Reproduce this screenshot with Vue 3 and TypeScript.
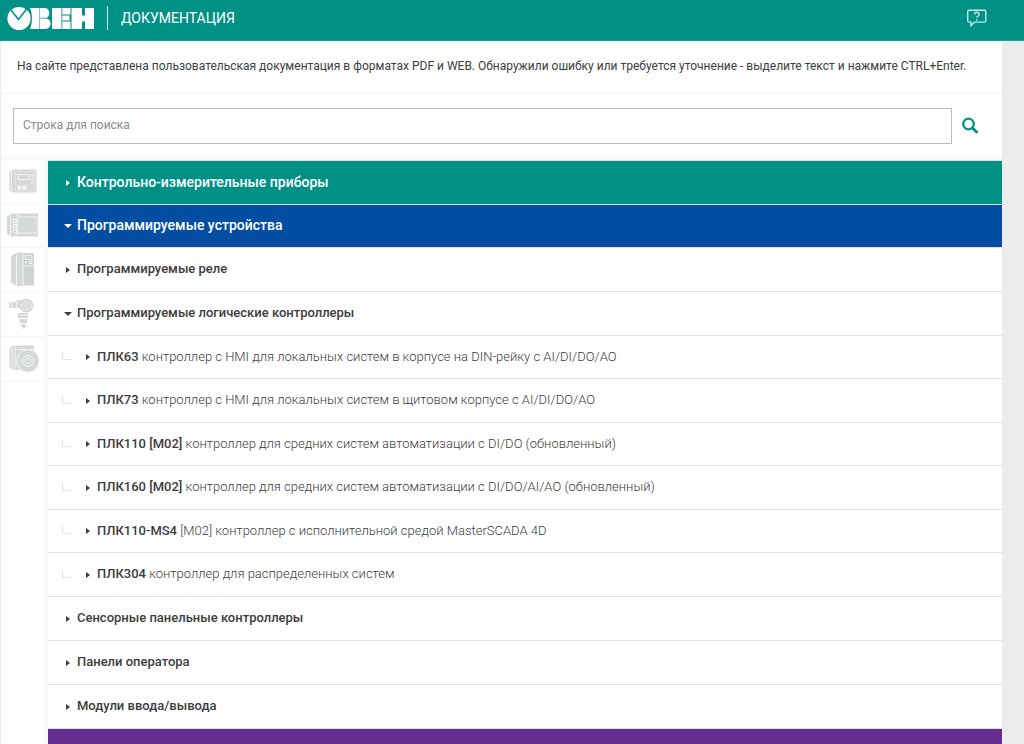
<script setup lang="ts">
import { ref } from 'vue'

interface Product { code: string; text: string }
interface Group { title: string; open: boolean; products: Product[] }

const query = ref('')

const groups = ref<Group[]>([
  { title: 'Программируемые реле', open: false, products: [] },
  {
    title: 'Программируемые логические контроллеры',
    open: true,
    products: [
      { code: 'ПЛК63', text: 'контроллер с HMI для локальных систем в корпусе на DIN-рейку с AI/DI/DO/AO' },
      { code: 'ПЛК73', text: 'контроллер с HMI для локальных систем в щитовом корпусе с AI/DI/DO/AO' },
      { code: 'ПЛК110 [М02]', text: 'контроллер для средних систем автоматизации с DI/DO (обновленный)' },
      { code: 'ПЛК160 [М02]', text: 'контроллер для средних систем автоматизации с DI/DO/AI/AO (обновленный)' },
      { code: 'ПЛК110-MS4', text: '[М02] контроллер с исполнительной средой MasterSCADA 4D' },
      { code: 'ПЛК304', text: 'контроллер для распределенных систем' },
    ],
  },
  { title: 'Сенсорные панельные контроллеры', open: false, products: [] },
  { title: 'Панели оператора', open: false, products: [] },
  { title: 'Модули ввода/вывода', open: false, products: [] },
])
</script>

<template>
  <div class="page">
    <header class="top">
      <a class="logo" href="#" aria-label="ОВЕН">
        <svg width="88" height="25" viewBox="0 0 88 25" fill="#fff">
          <circle cx="12" cy="12.5" r="11.6" />
          <path d="M4 4 11.500 13.500 20 2.500" fill="none" stroke="#009186" stroke-width="1.600" />
          <path d="M23 2h9.500v21H23c2.600-6 2.600-15 0-21z" />
          <path d="M33 2h4.500c5.500 0 6.500 7.500 2.300 9.800H33zM33 12.500h7c5.500 1.700 4.500 10.500-1.500 10.500H33z" />
          <path d="M45 2h9.500v21H45zM55.300 2H63.500v6.500h-8.200zM55.300 9.500H62.500v5h-7.200zM55.300 15.500H63.500V23h-8.200z" />
          <path d="M64.500 2H75v21H64.500zM75 9.500h3v6h-3zM78 2h9v21h-9z" />
        </svg>
      </a>
      <h1>ДОКУМЕНТАЦИЯ</h1>
      <button class="help" type="button" aria-label="Помощь">
        <svg width="22" height="18" viewBox="0 0 22 18" fill="none" stroke="#c5e9e5" stroke-width="1.400">
          <path d="M3 1.200h15.500q1.300 0 1.300 1.300v9.300q0 1.300-1.300 1.300H8.500L5 16.800V13.100H3q-1.300 0-1.300-1.300V2.500q0-1.300 1.300-1.300z" />
          <path d="M8.500 5.500c0-3 4.600-3 4.600 0 0 1.500-2.300 1.500-2.300 3.200M10.800 9.900v1.500" />
        </svg>
      </button>
    </header>

    <main class="content">
      <p class="notice">На сайте представлена пользовательская документация в форматах PDF и WEB. Обнаружили ошибку или требуется уточнение - выделите текст и нажмите CTRL+Enter.</p>

      <form class="search" role="search" @submit.prevent>
        <input v-model="query" type="text" placeholder="Строка для поиска" aria-label="Строка для поиска" />
        <button type="submit" aria-label="Найти">
          <svg width="18" height="18" viewBox="0 0 18 18" fill="none" stroke="#009186">
            <circle cx="7.500" cy="7" r="5.300" stroke-width="2.200" />
            <path d="M11.500 11 15.500 15" stroke-width="3" stroke-linecap="round" />
          </svg>
        </button>
      </form>

      <div class="catalog">
        <nav class="rail" aria-label="Разделы">
          <a href="#" aria-label="Контрольно-измерительные приборы">
            <svg width="34" height="34" viewBox="0 0 34 34">
              <path d="M4.500 7.500 9 5v24l-4.500-2.500z" fill="#d6d9d9" />
              <path d="M6.500 6v22" stroke="#f2f3f3" />
              <rect x="8.500" y="5.500" width="23" height="23" rx="1" fill="#d6d9d9" />
              <rect x="10.500" y="7.500" width="19" height="19" fill="none" stroke="#e3e5e5" />
              <rect x="13" y="10.500" width="11" height="5" fill="none" stroke="#f5f5f5" />
              <path d="M27 10v2M27 14v2M27 18v2" stroke="#f5f5f5" stroke-width="1.500" />
              <path d="M12.500 21.500h4v4h-4zM17.500 21.500h4v4h-4z" fill="#f5f5f5" />
            </svg>
          </a>
          <a href="#" aria-label="Программируемые устройства">
            <svg width="34" height="34" viewBox="0 0 34 34">
              <path d="M2 8.500 6 5.500h27v23H6l-4-3z" fill="#d6d9d9" />
              <path d="M5.500 5.500v23M12.500 5.500v23M12.500 9h20M12.500 25h20" stroke="#f2f3f3" />
              <path d="M8.500 11.500h3v3h-3zM8.500 16.500h3v3h-3zM8.500 21.500h3v3h-3z" fill="none" stroke="#f7f7f7" />
              <path d="M31.500 10v14" stroke="#e3e5e5" />
            </svg>
          </a>
          <a href="#" aria-label="Приводная техника">
            <svg width="34" height="38" viewBox="0 0 34 38">
              <path d="M6 6 12 2.500h6V36h-6L6 33z" fill="#d6d9d9" />
              <path d="M18 3h11v32.500H18z" fill="#d0d3d3" />
              <path d="M11.500 2.500V36M18 3v33M18 16h11" stroke="#f2f3f3" />
              <path d="M20.500 5.500h6.500v4h-6.500z" fill="none" stroke="#eceeee" />
              <path d="M20 12.500h2M24 11.500h3M24 13.500h3" stroke="#f7f7f7" />
            </svg>
          </a>
          <a href="#" aria-label="Датчики">
            <svg width="34" height="34" viewBox="0 0 34 34">
              <path d="M4.500 6h7v6h-7z" fill="#d6d9d9" />
              <path d="M11.500 4h8v8h-8z" fill="#dbdddd" />
              <path d="M7 6v6M11.500 5v7" stroke="#f2f3f3" />
              <circle cx="21.500" cy="9.500" r="7" fill="#d6d9d9" />
              <circle cx="21.500" cy="9.500" r="4.500" fill="none" stroke="#f2f3f3" />
              <path d="M19.500 8h4M19.500 11h4" stroke="#f2f3f3" />
              <path d="M13 17h10v5H13zM14.500 23h7.500v4h-7.500zM16.500 28H21v3l-2.200 2-2.300-2z" fill="#d6d9d9" />
              <path d="M13 19.500h10" stroke="#eceded" />
            </svg>
          </a>
          <a href="#" aria-label="Устройства связи">
            <svg width="34" height="34" viewBox="0 0 34 34">
              <path d="M4.500 7 8 4.500h21V29H8l-3.500-3z" fill="#d6d9d9" />
              <path d="M7 6v21.500M10 5v24M10 8.500h19" stroke="#f2f3f3" />
              <circle cx="23" cy="20" r="11.300" fill="#d6d9d9" stroke="#f7f7f7" />
              <circle cx="23" cy="20" r="5.500" fill="none" stroke="#f5f5f5" />
              <circle cx="23" cy="20" r="3" fill="none" stroke="#f0f1f1" />
            </svg>
          </a>
        </nav>

        <section class="tree">
          <button class="row category teal" type="button" aria-expanded="false">
            <i class="caret"></i>Контрольно-измерительные приборы
          </button>
          <button class="row category blue" type="button" aria-expanded="true">
            <i class="caret open"></i>Программируемые устройства
          </button>
          <template v-for="group in groups" :key="group.title">
            <button class="row group" type="button" :aria-expanded="group.open" @click="group.open = !group.open">
              <i class="caret" :class="{ open: group.open }"></i>{{ group.title }}
            </button>
            <ul v-if="group.open && group.products.length" class="products">
              <li v-for="product in group.products" :key="product.code">
                <button class="row product" type="button" aria-expanded="false">
                  <i class="branch"></i><i class="caret"></i><span><b>{{ product.code }}</b> {{ product.text }}</span>
                </button>
              </li>
            </ul>
          </template>
          <div class="row purple"></div>
        </section>
      </div>
    </main>
  </div>
</template>

<style>
html,
body {
  background: #ececec;
}

body {
  margin: 0;
  height: 100vh;
  overflow: hidden;
}
</style>

<style scoped>
.page {
  height: 100vh;
  overflow: hidden;
  font-family: Roboto, "Noto Sans", sans-serif;
  color: #3c3c3c;
}

button {
  font: inherit;
  color: inherit;
  padding: 0;
  border: 0;
  background: none;
  cursor: pointer;
}

svg {
  display: block;
}

.top {
  display: flex;
  align-items: center;
  box-sizing: border-box;
  height: 41px;
  padding: 0 36px 4px 7px;
  background: #009186;
  border-bottom: 1px solid #00a99d;
}

h1 {
  flex: 1;
  margin: 0 0 0 12px;
  padding-left: 13px;
  border-left: 1px solid #cdebe8;
  font-size: 14px;
  font-weight: 400;
  line-height: 24px;
  color: #fff;
}

.content {
  margin-right: 22px;
  border-left: 1px solid #ececec;
  background: #fff;
}

.notice {
  margin: 0;
  padding: 15px 16px 16px;
  border-bottom: 3px solid #f9f9f9;
  font-size: 12px;
  line-height: 20px;
  white-space: nowrap;
}

.search {
  display: flex;
  align-items: center;
  gap: 9px;
  padding: 13px 23px 12px 12px;
  border-bottom: 4px solid #f9f9f9;
}

.search input {
  flex: 1;
  box-sizing: border-box;
  height: 36px;
  padding: 0 9px 2px;
  border: 1px solid #bdbdbd;
  font: 12px Roboto, "Noto Sans", sans-serif;
  color: #3c3c3c;
}

.search input::placeholder {
  color: #8a8a8a;
}

.search button {
  padding-bottom: 1px;
}

.catalog {
  display: flex;
}

.rail {
  flex: none;
  width: 43px;
  min-height: 600px;
  border-right: 4px solid #f9f9f9;
}

.rail a {
  display: flex;
  align-items: center;
  justify-content: center;
  box-sizing: border-box;
  height: 44px;
  padding: 0 2px 2px 0;
  border-bottom: 1px solid #f4f4f4;
}

.rail a:nth-child(n + 4) {
  height: 45px;
}

.tree {
  flex: 1;
  min-width: 0;
}

.row {
  display: flex;
  align-items: center;
  box-sizing: border-box;
  width: 100%;
  height: 44px;
  padding: 0 0 2px 16px;
  border-top: 1px solid #e0e0e0;
  font-size: 13px;
  text-align: left;
  white-space: nowrap;
}

.category {
  font-size: 14px;
  font-weight: 500;
  color: #fff;
}

.teal {
  background: #009186;
}

.blue {
  height: 43px;
  background: #034ea2;
}

.purple {
  background: #662d91;
}

.group {
  font-weight: 500;
}

.products {
  margin: 0;
  padding: 0;
  list-style: none;
}

.product {
  height: 43px;
  padding-left: 14px;
  font-weight: 300;
}

.products li:nth-child(even) .product {
  height: 44px;
}

.product b {
  font-weight: 500;
}

.caret {
  flex: none;
  display: flex;
  justify-content: center;
  width: 8px;
  margin-right: 5px;
}

.caret::before {
  content: "";
  margin-top: 2px;
  border-style: solid;
  border-width: 3px 0 3px 4px;
  border-color: transparent transparent transparent currentcolor;
}

.caret.open::before {
  border-width: 4px 4px 0;
  border-color: currentcolor transparent transparent;
}

.branch {
  flex: none;
  width: 8px;
  height: 7px;
  margin-right: 13px;
  border: solid #e2e2e2;
  border-width: 0 0 1px 1px;
}
</style>
